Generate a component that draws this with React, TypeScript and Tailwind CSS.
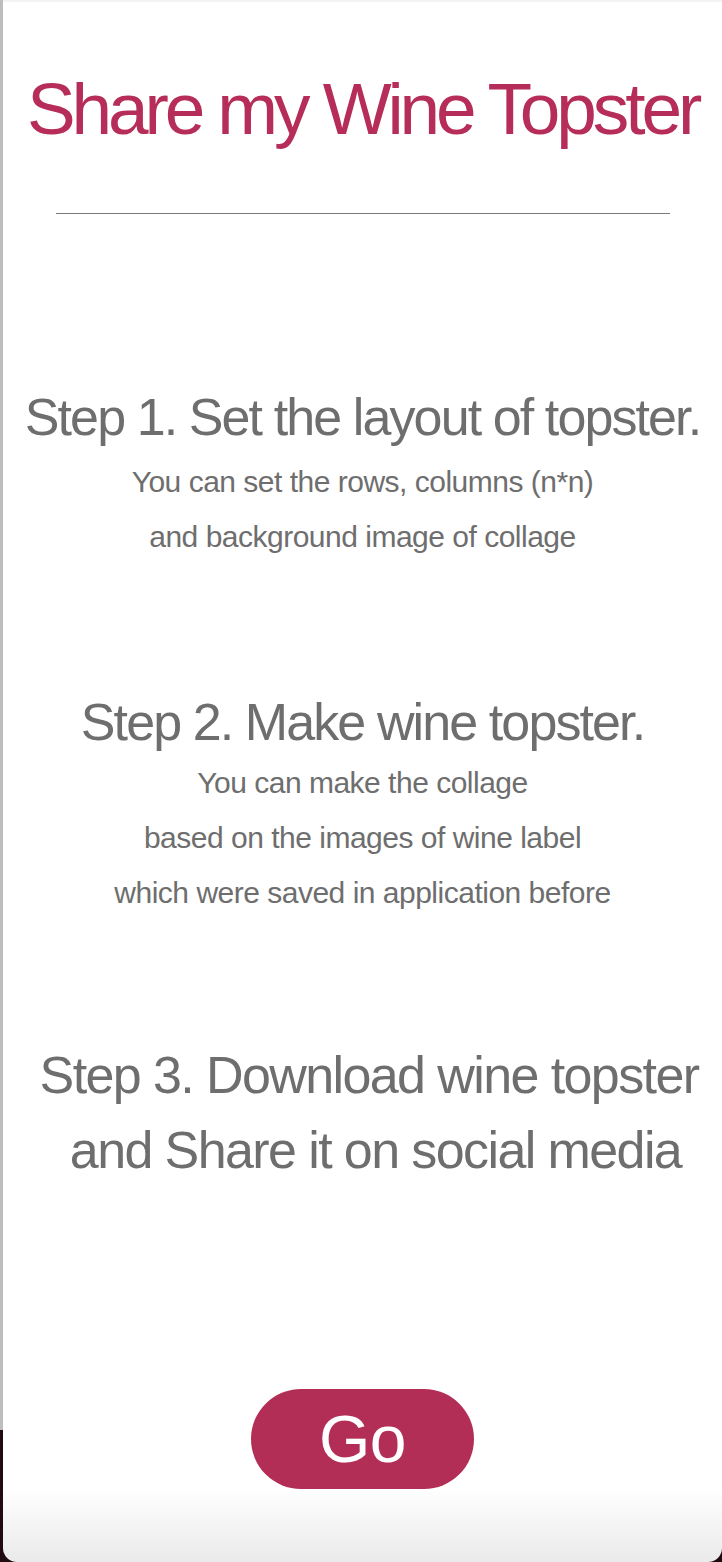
import { FunctionComponent } from "react";

const steps1 = ["You can set the rows, columns (n*n)", "and background image of collage"];
const steps2 = [
  "You can make the collage",
  "based on the images of wine label",
  "which were saved in application before",
];

const SubLines: FunctionComponent<{ lines: string[] }> = ({ lines }) => {
  return (
    <div className="flex flex-col items-center text-[30px] leading-[55px] tracking-[-0.5px] text-[#6e6e6e]">
      {lines.map((l) => (
        <p key={l} className="whitespace-nowrap">
          {l}
        </p>
      ))}
    </div>
  );
};

const App: FunctionComponent = () => {
  return (
    <div
      className="flex h-[1562px] w-[722px] bg-[linear-gradient(to_bottom,#bdbdbd_0,#bdbdbd_1430px,#1f0b10_1430px)]"
      style={{ fontFamily: '"Liberation Sans", Arial, Helvetica, sans-serif' }}
    >
      <div className="ml-[3px] flex h-full flex-1 flex-col items-center overflow-hidden rounded-b-[14px] bg-[linear-gradient(to_bottom,#ffffff_1488px,#eaeaea)]">
        <div className="h-[2px] w-full bg-[#f3f3f3]" />
        <h1 className="mt-[70px] whitespace-nowrap text-[73px] leading-none tracking-[-4.1px] text-[#b52d58]">
          Share my Wine Topster
        </h1>
        <div className="mt-[68px] h-[1px] w-[614px] bg-[#7a7a7a]" />

        <h2 className="mt-[177px] whitespace-nowrap text-[52px] leading-none tracking-[-1.9px] text-[#6e6e6e]">
          Step 1. Set the layout of topster.
        </h2>
        <div className="mt-[11px]">
          <SubLines lines={steps1} />
        </div>

        <h2 className="mt-[132px] whitespace-nowrap text-[52px] leading-none tracking-[-1.9px] text-[#6e6e6e]">
          Step 2. Make wine topster.
        </h2>
        <div className="mt-[7px]">
          <SubLines lines={steps2} />
        </div>

        <div className="mt-[118px] flex flex-col items-center text-[52px] leading-[75px] tracking-[-1.6px] text-[#6e6e6e]">
          <p className="whitespace-nowrap pl-[13px]">Step 3. Download wine topster</p>
          <p className="whitespace-nowrap pl-[26px]">and Share it on social media</p>
        </div>

        <button className="mt-[201px] flex h-[100px] w-[223px] items-center justify-center rounded-full bg-[#b32e56] text-[66px] leading-none tracking-[-0.5px] text-white">
          Go
        </button>
      </div>
    </div>
  );
};

export default App;
